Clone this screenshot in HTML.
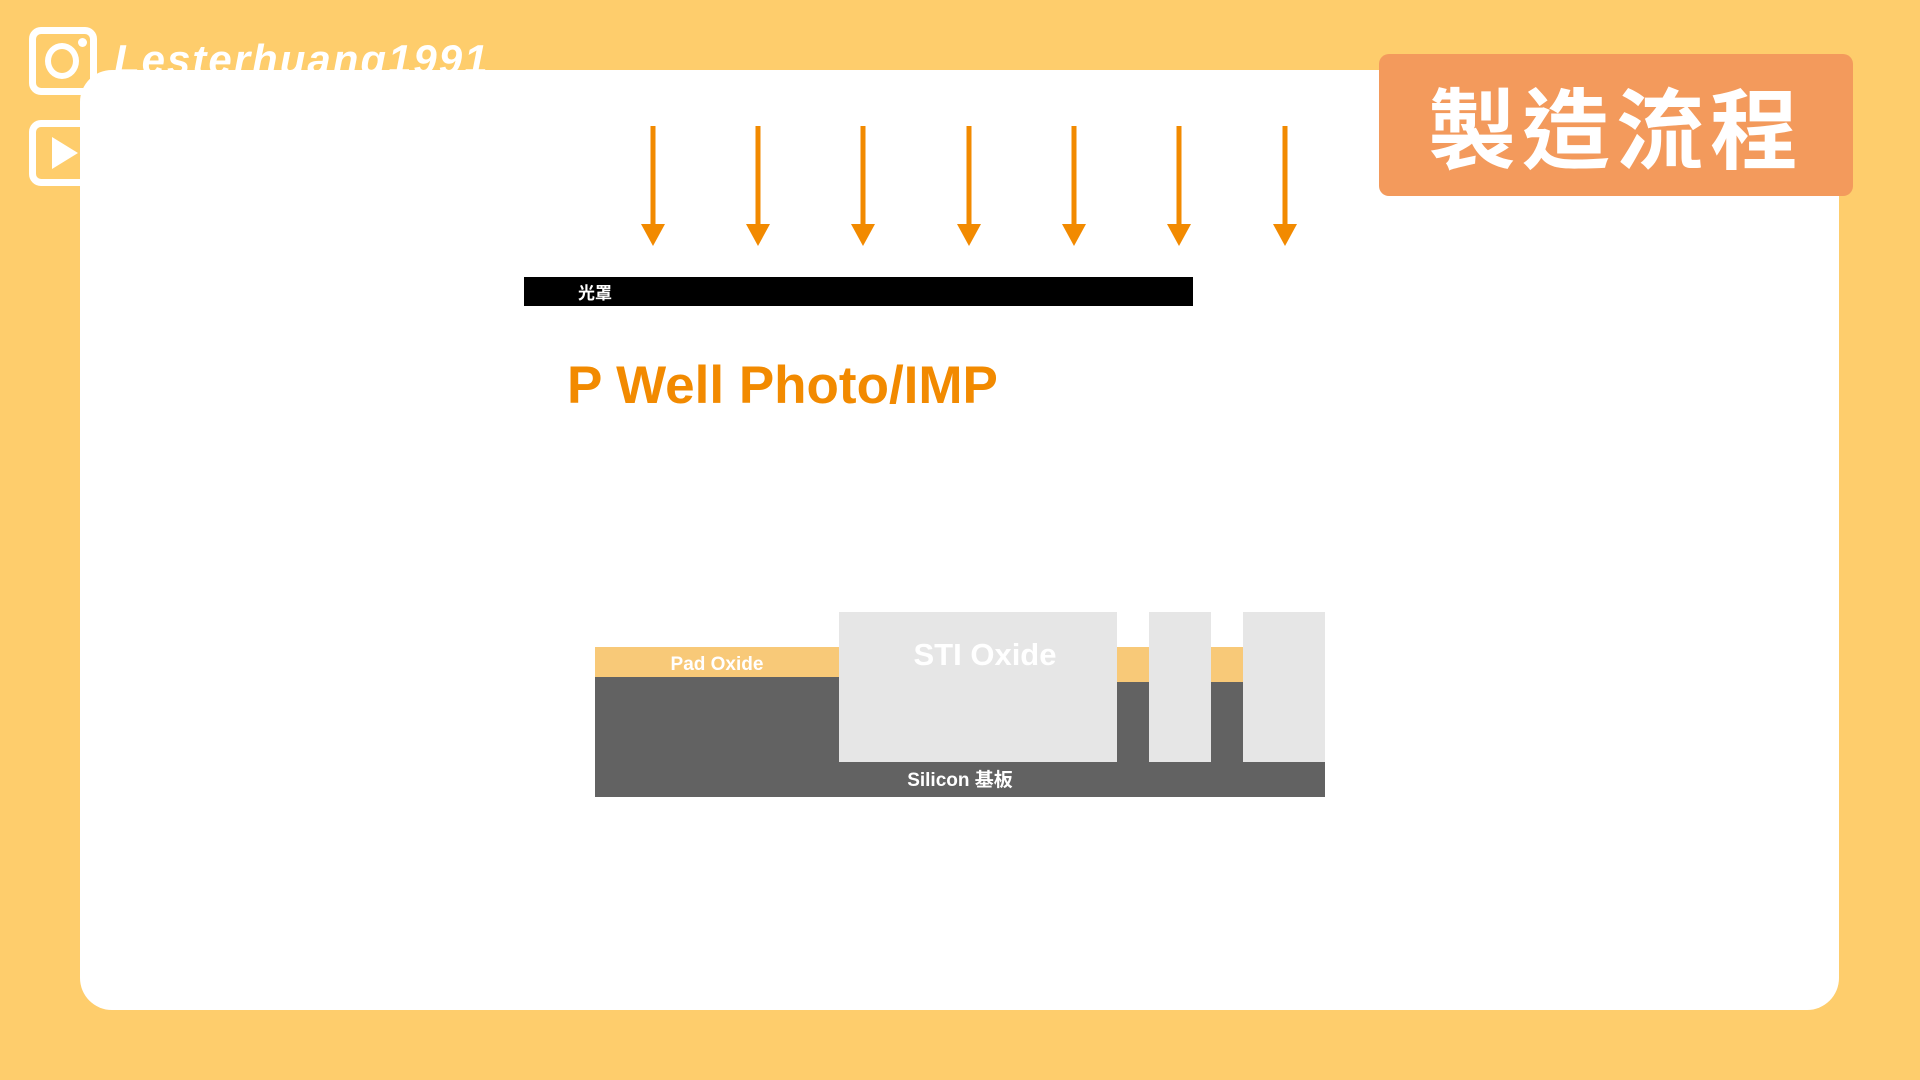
<!DOCTYPE html>
<html><head><meta charset="utf-8"><style>
*{margin:0;padding:0;box-sizing:border-box}
body{width:1920px;height:1080px;background:#fecd6c;position:relative;overflow:hidden;font-family:"Liberation Sans","Noto Sans CJK TC",sans-serif}
.abs{position:absolute}
.card{left:80px;top:70px;width:1759px;height:940px;background:#fff;border-radius:32px}
</style></head><body>
<div class="abs" style="left:29px;top:27px;width:68px;height:68px;border:7px solid #fff;border-radius:12px"></div>
<div class="abs" style="left:45px;top:43px;width:34px;height:36px;border:6px solid #fff;border-radius:50%"></div>
<div class="abs" style="left:78px;top:38px;width:9px;height:9px;background:#fff;border-radius:50%"></div>
<div class="abs" style="left:29px;top:120px;width:68px;height:66px;border:7px solid #fff;border-radius:12px"></div>
<div class="abs" style="left:52px;top:137px;width:0;height:0;border-left:26px solid #fff;border-top:16px solid transparent;border-bottom:16px solid transparent"></div>
<div class="abs" style="left:114px;top:36px;color:#fff;font-size:42px;font-weight:bold;font-style:italic;letter-spacing:2px">Lesterhuang1991</div>
<div class="abs card"></div>
<div class="abs" style="left:1379px;top:54px;width:474px;height:142px;background:#f39a5c;border-radius:10px;color:#fff;font-size:88px;font-weight:bold;text-align:center;line-height:142px;letter-spacing:6px;font-family:'Noto Sans CJK TC',sans-serif">製造流程</div>
<svg class="abs" style="left:0;top:0" width="1920" height="1080">
<g fill="#f28a00" stroke="#f28a00" stroke-width="5">
<line x1="653" y1="126" x2="653" y2="228"/><polygon stroke="none" points="641,224 665,224 653,246"/>
<line x1="758" y1="126" x2="758" y2="228"/><polygon stroke="none" points="746,224 770,224 758,246"/>
<line x1="863" y1="126" x2="863" y2="228"/><polygon stroke="none" points="851,224 875,224 863,246"/>
<line x1="969" y1="126" x2="969" y2="228"/><polygon stroke="none" points="957,224 981,224 969,246"/>
<line x1="1074" y1="126" x2="1074" y2="228"/><polygon stroke="none" points="1062,224 1086,224 1074,246"/>
<line x1="1179" y1="126" x2="1179" y2="228"/><polygon stroke="none" points="1167,224 1191,224 1179,246"/>
<line x1="1285" y1="126" x2="1285" y2="228"/><polygon stroke="none" points="1273,224 1297,224 1285,246"/>
</g>
</svg>
<div class="abs" style="left:524px;top:277px;width:669px;height:29px;background:#000;color:#fff;font-size:17px;font-weight:bold;line-height:29px;padding-left:54px;font-family:'Noto Sans CJK TC',sans-serif">光罩</div>
<div class="abs" style="left:567px;top:355px;color:#f28a00;font-size:53px;font-weight:bold">P Well Photo/IMP</div>
<div class="abs" style="left:595px;top:647px;width:730px;height:35px;background:#f8c978"></div>
<div class="abs" style="left:595px;top:677px;width:730px;height:120px;background:#626262"></div>
<div class="abs" style="left:1117px;top:677px;width:126px;height:5px;background:#f8c978"></div>
<div class="abs" style="left:839px;top:612px;width:278px;height:150px;background:#e6e6e6"></div>
<div class="abs" style="left:1149px;top:612px;width:62px;height:150px;background:#e6e6e6"></div>
<div class="abs" style="left:1243px;top:612px;width:82px;height:150px;background:#e6e6e6"></div>
<div class="abs" style="left:595px;top:768px;width:730px;height:26px;color:#fff;font-size:19px;font-weight:bold;text-align:center;line-height:26px">Silicon 基板</div>
<div class="abs" style="left:595px;top:652px;width:244px;text-align:center;color:#fff;font-size:19px;font-weight:bold;line-height:26px">Pad Oxide</div>
<div class="abs" style="left:839px;top:637px;width:292px;text-align:center;color:#fff;font-size:31px;font-weight:bold">STI Oxide</div>
</body></html>
